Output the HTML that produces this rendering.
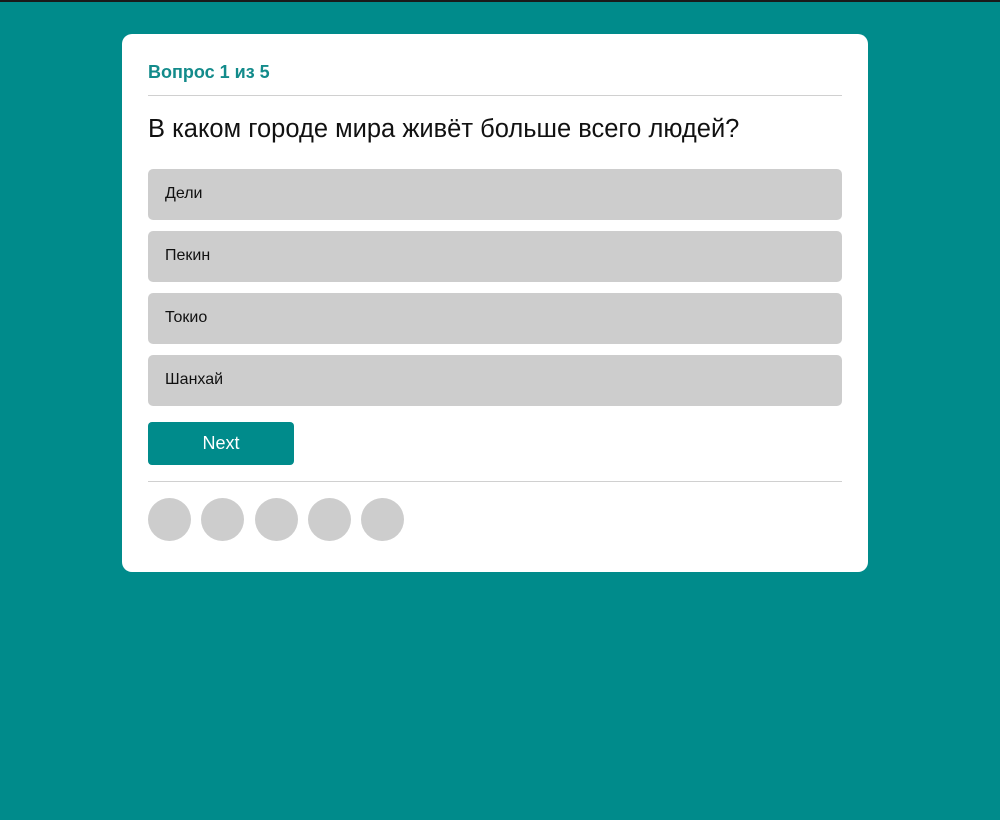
<!DOCTYPE html>
<html><head><meta charset="utf-8"><style>
*{box-sizing:border-box;margin:0;padding:0}
body{width:1000px;height:820px;background:#008b8b;font-family:"Liberation Sans","DejaVu Sans",sans-serif;position:relative;overflow:hidden}
.top{position:absolute;left:0;top:0;width:1000px;height:2px;background:#1a1a1a}
.card{position:absolute;left:122px;top:34px;width:746px;height:538px;background:#fff;border-radius:10px}
.t{position:absolute;left:26px;top:28px;font-size:18px;font-weight:bold;color:#138b8b}
.hr{position:absolute;left:26px;width:694px;height:1px;background:#d0d0d0}
.q{position:absolute;left:26px;top:81px;font-size:25.5px;color:#111;white-space:nowrap}
.o{position:absolute;left:26px;width:694px;height:51px;background:#cdcdcd;border-radius:5px;font-size:16px;color:#111;padding-left:17px;line-height:50px}
.btn{position:absolute;left:26px;top:388px;width:146px;height:43px;background:#008b8b;border-radius:4px;color:#fff;font-size:18px;text-align:center;line-height:42px}
.c{position:absolute;top:464px;width:43px;height:43px;border-radius:50%;background:#cdcdcd}
</style></head><body>
<div class="top"></div>
<div class="card">
<div class="t">Вопрос 1 из 5</div>
<div class="hr" style="top:61px"></div>
<div class="q">В каком городе мира живёт больше всего людей?</div>
<div class="o" style="top:135px">Дели</div>
<div class="o" style="top:197px">Пекин</div>
<div class="o" style="top:259px">Токио</div>
<div class="o" style="top:321px">Шанхай</div>
<div class="btn">Next</div>
<div class="hr" style="top:447px"></div>
<div class="c" style="left:26px"></div>
<div class="c" style="left:79px"></div>
<div class="c" style="left:133px"></div>
<div class="c" style="left:186px"></div>
<div class="c" style="left:239px"></div>
</div>
</body></html>
